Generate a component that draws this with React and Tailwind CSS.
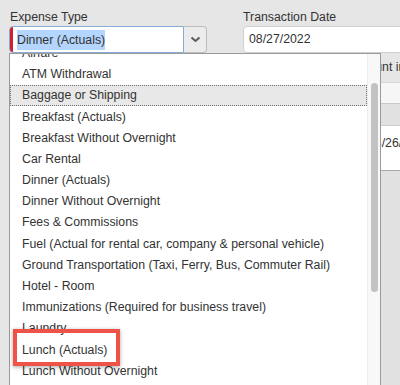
import React from "react";

const items = [
  "Airfare",
  "ATM Withdrawal",
  "Baggage or Shipping",
  "Breakfast (Actuals)",
  "Breakfast Without Overnight",
  "Car Rental",
  "Dinner (Actuals)",
  "Dinner Without Overnight",
  "Fees & Commissions",
  "Fuel (Actual for rental car, company & personal vehicle)",
  "Ground Transportation (Taxi, Ferry, Bus, Commuter Rail)",
  "Hotel - Room",
  "Immunizations (Required for business travel)",
  "Laundry",
  "Lunch (Actuals)",
  "Lunch Without Overnight",
  "Mileage",
];

export default function App() {
  return (
    <div className="relative w-[400px] h-[385px] overflow-hidden bg-[#e6e6e6] font-['Liberation_Sans',Arial,sans-serif] text-[12.3px] text-[#333]">
      {/* header fields */}
      <div className="flex pt-[9px] pl-[9px]">
        <div className="w-[198px]">
          <div className="h-[17px] leading-[17px] pl-[1px] text-[#333]">Expense Type</div>
          <div className="flex h-[27px]">
            <div className="flex items-center w-[175px] h-full bg-white border border-[#86acd6] rounded-l-[4px] overflow-hidden">
              <div className="w-[3px] h-full bg-[#d0202e] shrink-0" />
              <div className="pl-[4px]">
                <span className="bg-[#b4d5fd] leading-[20px] inline-block">Dinner (Actuals)</span>
              </div>
            </div>
            <div className="flex items-center justify-center w-[23px] h-full bg-[#ececec] border border-l-0 border-[#bdbdbd] rounded-r-[4px]">
              <svg width="11" height="7" viewBox="0 0 11 7">
                <polyline points="1.5,1.5 5.5,5 9.5,1.5" fill="none" stroke="#5a5a5a" strokeWidth="2" />
              </svg>
            </div>
          </div>
        </div>
        <div className="ml-[36px] flex-1">
          <div className="h-[17px] leading-[17px]">Transaction Date</div>
          <div className="flex items-center h-[27px] w-[180px] bg-white border border-[#d0d0d0] rounded-[4px] pl-[5px]">
            08/27/2022
          </div>
        </div>
      </div>

      {/* background content partly hidden by dropdown */}
      <div className="ml-[300px]">
        <div className="h-[29px] flex items-center pl-[50px] whitespace-nowrap">Amount in USD</div>
        <div className="h-[21px] bg-[#f6f6f6] border-t border-[#d6d6d6]" />
        <div className="h-[22px] bg-[#e1e1e1] border-t border-[#c9c9c9]" />
        <div className="h-[45px] bg-white border-t border-[#cfcfcf] pl-[68px] pt-[8px] whitespace-nowrap">08/26/2022</div>
        <div className="h-[220px] bg-[#e1e1e1] border-t border-[#a9a9a9]" />
      </div>

      {/* dropdown list overlay */}
      <div className="absolute left-[9px] top-[53px] w-[372px] h-[340px] bg-white border border-[#9a9a9a] overflow-hidden flex">
        <div className="flex-1 overflow-hidden">
          <div className="mt-[-11.4px]">
            {items.map((it) =>
              it === "Baggage or Shipping" ? (
                <div
                  key={it}
                  className="h-[21.2px] flex items-center pl-[11px] bg-[#e8e8e8] border border-dotted border-[#6f6f6f] whitespace-nowrap"
                >
                  {it}
                </div>
              ) : (
                <div key={it} className="h-[21.2px] flex items-center pl-[12px] whitespace-nowrap">
                  {it}
                </div>
              )
            )}
          </div>
        </div>
        <div className="w-[13px] bg-[#f8f8f8] border-l border-[#ececec] pt-[29px] flex justify-center">
          <div className="w-[7px] h-[209px] rounded-full bg-[#c2c2c2]" />
        </div>
      </div>

      {/* annotation box */}
      <div className="absolute left-[13px] top-[329px] w-[107px] h-[37px] border-[4px] border-[#ef5347] shadow-[0_1px_4px_rgba(0,0,0,0.35)]" />
    </div>
  );
}
